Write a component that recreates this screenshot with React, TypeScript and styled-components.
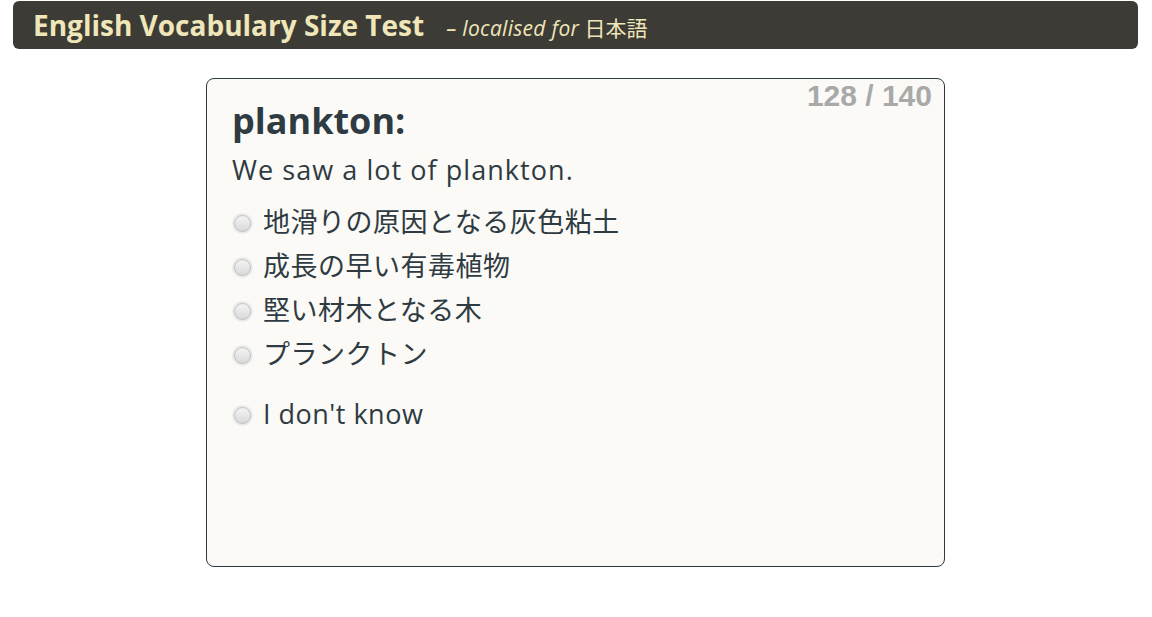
import styled, { createGlobalStyle } from 'styled-components';

const GlobalStyle = createGlobalStyle`
  body {
    margin: 0;
    background: #ffffff;
    font-family: "Open Sans", "Noto Sans CJK JP", sans-serif;
    color: #2f3b42;
  }
`;

const options = [
  '地滑りの原因となる灰色粘土',
  '成長の早い有毒植物',
  '堅い材木となる木',
  'プランクトン',
];

const App = () => {
  return (
    <Page>
      <GlobalStyle />
      <Header>
        <Title>English Vocabulary Size Test</Title>
        <Subtitle>
          <em>– localised for</em> 日本語
        </Subtitle>
      </Header>
      <Main>
        <Card>
          <Counter>128 / 140</Counter>
          <Word>plankton:</Word>
          <Sentence>We saw a lot of plankton.</Sentence>
          <OptionList>
            {options.map((text) => (
              <Option key={text}>
                <Radio />
                <OptionText>{text}</OptionText>
              </Option>
            ))}
          </OptionList>
          <DontKnow>
            <Radio />
            <OptionText>I don't know</OptionText>
          </DontKnow>
        </Card>
      </Main>
    </Page>
  );
};

export default App;

const Page = styled.div`
  padding-top: 1px;
`;

const Header = styled.div`
  display: flex;
  align-items: center;
  gap: 22px;
  height: 48px;
  margin: 0 14px 0 13px;
  padding-left: 20px;
  background: #3c3b35;
  border-radius: 6px;
`;

const Title = styled.h1`
  margin: 0;
  font-size: 28px;
  font-weight: 700;
  color: #efe6b9;
`;

const Subtitle = styled.span`
  font-size: 21px;
  color: #efe6b9;
  padding-top: 4px;

  em {
    font-style: italic;
    letter-spacing: 0.3px;
  }
`;

const Main = styled.div`
  display: flex;
  justify-content: center;
  padding: 29px 1px 0 0;
`;

const Card = styled.div`
  position: relative;
  box-sizing: border-box;
  width: 739px;
  height: 489px;
  padding: 15px 25px;
  background: #fbfaf7;
  border: 1px solid #2c3940;
  border-radius: 8px;
`;

const Counter = styled.div`
  position: absolute;
  top: 0;
  right: 12px;
  font-family: "Liberation Sans", Arial, sans-serif;
  font-size: 30px;
  font-weight: 700;
  color: #a9a9a9;
`;

const Word = styled.h2`
  margin: 0;
  font-size: 36px;
  font-weight: 700;
  line-height: 54px;
`;

const Sentence = styled.p`
  margin: 0 0 7px;
  font-size: 27px;
  letter-spacing: 1.05px;
  line-height: 44px;
`;

const OptionList = styled.div`
  display: flex;
  flex-direction: column;
`;

const Option = styled.label`
  display: flex;
  align-items: center;
  gap: 12px;
  height: 44px;
  font-size: 27px;
  letter-spacing: 0.5px;
`;

const DontKnow = styled(Option)`
  margin-top: 16px;
`;

const Radio = styled.span`
  flex: none;
  box-sizing: border-box;
  width: 17px;
  height: 17px;
  margin: 4px 0 0 2px;
  border-radius: 50%;
  border: 1px solid #bdbdbd;
  background: linear-gradient(#f4f4f4, #d9d9d9);
  box-shadow: 0 0 0 2px #eaeaea;
`;

const OptionText = styled.span`
  line-height: 1;
`;
